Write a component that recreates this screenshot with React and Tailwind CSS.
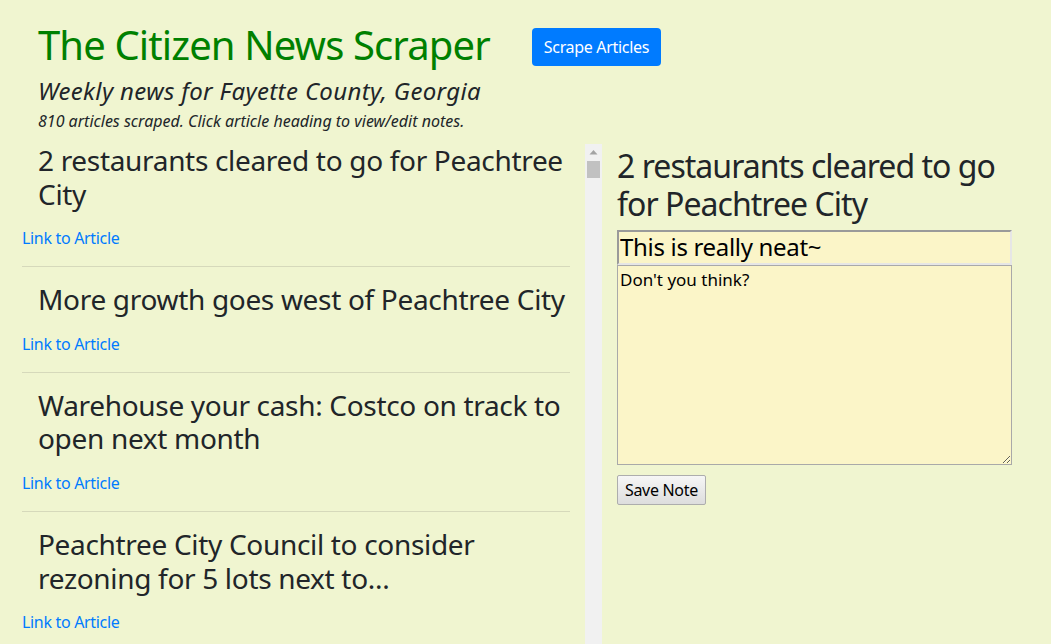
import React from 'react';

const articles = [
  '2 restaurants cleared to go for Peachtree City',
  'More growth goes west of Peachtree City',
  'Warehouse your cash: Costco on track to open next month',
  'Peachtree City Council to consider rezoning for 5 lots next to...',
  'Fayette County Commission approves new budget',
];

function ArticleItem({ title, first }) {
  return (
    <div>
      {!first && <hr className="mt-4 mb-4 border-0 border-t border-[#d6d9bb]" />}
      <h3 className="pl-4 text-[28px] leading-[1.2] text-[#212529] mb-[15px]">{title}</h3>
      <a href="#" className="text-[16px] leading-6 text-[#007bff]">Link to Article</a>
    </div>
  );
}

export default function App() {
  return (
    <div className="h-screen overflow-hidden bg-[#f0f5d0] font-['Segoe_UI','Noto_Sans',sans-serif] tracking-[-0.02em] text-[#212529]">
      {/* Header */}
      <div className="pl-[38px] pt-[21px]">
        <div className="flex items-center">
          <h1 className="text-[40px] leading-[1.2] tracking-[-0.022em] text-[#008000]">The Citizen News Scraper</h1>
          <button className="ml-[42px] mt-[3px] h-[38px] px-3 rounded bg-[#007bff] text-white text-[16px]">
            Scrape Articles
          </button>
        </div>
        <h4 className="mt-2 text-[24px] leading-[1.2] italic tracking-[0.015em]">Weekly news for Fayette County, Georgia</h4>
        <h6 className="mt-[6px] text-[16px] leading-[1.2] italic tracking-normal">810 articles scraped. Click article heading to view/edit notes.</h6>
      </div>

      <div className="flex pl-[22px] mt-[13px]">
        {/* Article list */}
        <div className="w-[548px] h-[520px] overflow-hidden">
          {articles.map((t, i) => (
            <ArticleItem key={i} title={t} first={i === 0} />
          ))}
        </div>

        {/* Scrollbar */}
        <div className="ml-[15px] w-[17px] h-[520px] bg-[#f1f1f1] flex flex-col items-center">
          <svg width="9" height="6" viewBox="0 0 9 6" className="mt-[5px]">
            <path d="M0.5 5.5 L4.5 1 L8.5 5.5 Z" fill="#a3a3a3" />
          </svg>
          <div className="mt-[6px] w-[13px] h-[17px] bg-[#c1c1c1]" />
        </div>

        {/* Note panel */}
        <div className="ml-[15px] w-[395px] pt-[3px]">
          <h2 className="text-[32px] leading-[1.2] tracking-[-0.03em] mb-[6px]">2 restaurants cleared to go for Peachtree City</h2>
          <input
            defaultValue="This is really neat~"
            className="block w-full h-[35px] px-px bg-[#fbf5c8] text-[24px] text-black border-2 border-t-[#9a9a9a] border-l-[#9a9a9a] border-r-[#e6e6e6] border-b-[#e6e6e6] outline-none"
          />
          <textarea
            defaultValue="Don't you think?"
            className="block w-full h-[200px] px-[2px] py-[3px] bg-[#fbf5c8] text-[17px] leading-[1.25] text-black border border-[#a9a9a9] outline-none tracking-normal"
          />
          <button className="mt-[10px] h-[30px] px-[7px] rounded-[2px] border border-[#adadad] bg-gradient-to-b from-[#f6f6f6] to-[#dddddd] text-[16px] text-black">
            Save Note
          </button>
        </div>
      </div>
    </div>
  );
}
